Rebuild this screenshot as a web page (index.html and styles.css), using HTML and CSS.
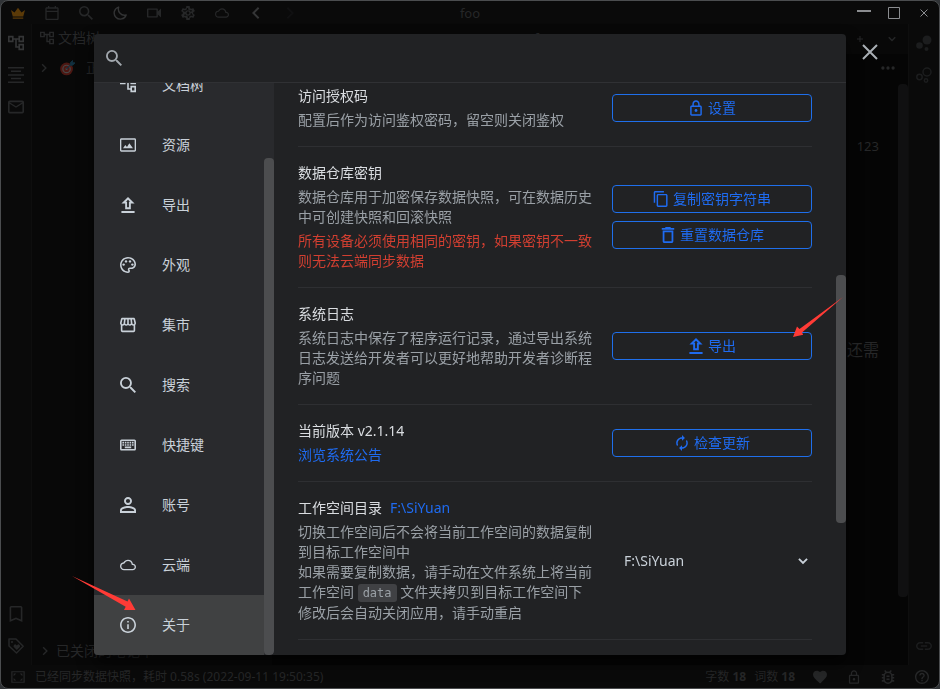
FILE: index.html
```html
<!DOCTYPE html>
<html lang="zh-CN">
<head>
	<meta charset="utf-8">
	<title>foo</title>
	<link rel="stylesheet" href="styles.css">
</head>
<body>
	<!-- icons -->
	<svg class="sprite" aria-hidden="true">
		<symbol id="iconSearch" viewBox="3 3 17.5 17.5"><path d="M15.5 14h-.79l-.28-.27A6.47 6.47 0 0 0 16 9.5 6.5 6.5 0 1 0 9.5 16c1.61 0 3.09-.59 4.23-1.57l.27.28v.79l5 4.99L20.49 19l-4.99-5zm-6 0C7.01 14 5 11.99 5 9.5S7.01 5 9.5 5 14 7.01 14 9.5 11.99 14 9.5 14z"/></symbol>
		<symbol id="iconFiles" viewBox="2 2 20 20"><path d="M22 11V3h-7v3H9V3H2v8h7V8h2v10h4v3h7v-8h-7v3h-2V8h2v3h7zM7 9H4V5h3v4zm10 6h3v4h-3v-4zm0-10h3v4h-3V5z"/></symbol>
		<symbol id="iconImage" viewBox="0 0 24 24"><path d="M22 4v16H2V4h20m0-2H2C.9 2 0 2.9 0 4v16c0 1.1.9 2 2 2h20c1.1 0 2-.9 2-2V4c0-1.1-.9-2-2-2zM4.5 17l3.5-5 2.5 3 3.5-5.5 5.5 7.5z"/></symbol>
		<symbol id="iconUpload" viewBox="3.5 3 17 17"><path d="M9 16h6v-6h4l-7-7-7 7h4v6zm3-10.17L14.17 8H13v6h-2V8H9.83L12 5.83zM5 18h14v2H5v-2z"/></symbol>
		<symbol id="iconTheme" viewBox="2 2 20 20"><path d="M12 22C6.49 22 2 17.51 2 12S6.49 2 12 2s10 4.04 10 9c0 3.31-2.69 6-6 6h-1.77c-.28 0-.5.22-.5.5 0 .12.05.23.13.33.41.47.64 1.06.64 1.67A2.5 2.5 0 0 1 12 22zm0-18c-4.41 0-8 3.59-8 8s3.59 8 8 8c.28 0 .5-.22.5-.5a.54.54 0 0 0-.14-.35c-.41-.46-.63-1.05-.63-1.65a2.5 2.5 0 0 1 2.5-2.5H16c2.21 0 4-1.79 4-4 0-3.86-3.59-7-8-7z"/><circle cx="6.5" cy="11.5" r="1.5"/><circle cx="9.5" cy="7.5" r="1.5"/><circle cx="14.5" cy="7.5" r="1.5"/><circle cx="17.5" cy="11.5" r="1.5"/></symbol>
		<symbol id="iconBazaar" viewBox="2 2 20 20"><path d="M21.9 8.89l-1.05-4.37c-.22-.9-1-1.52-1.91-1.52H5.05c-.9 0-1.69.63-1.9 1.52L2.1 8.89c-.24 1.02-.02 2.06.62 2.88.08.11.19.19.28.29V19c0 1.1.9 2 2 2h14c1.1 0 2-.9 2-2v-6.94c.09-.09.2-.18.28-.28.64-.82.87-1.87.62-2.89zm-2.99-3.9l1.05 4.37c.1.42.01.84-.25 1.17-.14.18-.44.47-.94.47-.61 0-1.14-.49-1.21-1.14L16.98 5l1.93-.01zM13 5h1.96l.54 4.52c.05.39-.07.78-.33 1.07-.22.26-.54.41-.95.41-.67 0-1.22-.59-1.22-1.31V5zM8.49 9.52L9.04 5H11v4.69c0 .72-.55 1.31-1.29 1.31-.34 0-.65-.15-.89-.41-.25-.29-.37-.68-.33-1.07zm-4.45-.16L5.05 5h1.97l-.58 4.86c-.08.65-.6 1.14-1.21 1.14-.49 0-.8-.29-.93-.47-.27-.32-.36-.75-.26-1.17zM5 19v-6.03c.08.01.15.03.23.03.87 0 1.66-.36 2.24-.95.6.6 1.4.95 2.31.95.87 0 1.65-.36 2.23-.93.59.57 1.39.93 2.29.93.84 0 1.64-.35 2.24-.95.58.59 1.37.95 2.24.95.08 0 .15-.02.23-.03V19H5z"/></symbol>
		<symbol id="iconKeymap" viewBox="2 2 20 20"><path d="M20 7v10H4V7h16m0-2H4c-1.1 0-2 .9-2 2v10c0 1.1.9 2 2 2h16c1.1 0 2-.9 2-2V7c0-1.1-.9-2-2-2zm-9 3h2v2h-2zm0 3h2v2h-2zM8 8h2v2H8zm0 3h2v2H8zm-3 0h2v2H5zm0-3h2v2H5zm3 6h8v2H8zm6-3h2v2h-2zm0-3h2v2h-2zm3 3h2v2h-2zm0-3h2v2h-2z"/></symbol>
		<symbol id="iconAccount" viewBox="4 4 16 16"><path d="M12 5.9a2.1 2.1 0 1 1 0 4.2 2.1 2.1 0 0 1 0-4.2m0 9c2.97 0 6.1 1.46 6.1 2.1v1.1H5.9V17c0-.64 3.13-2.1 6.1-2.1M12 4C9.79 4 8 5.79 8 8s1.79 4 4 4 4-1.79 4-4-1.79-4-4-4zm0 9c-2.67 0-8 1.34-8 4v3h16v-3c0-2.66-5.33-4-8-4z"/></symbol>
		<symbol id="iconCloud" viewBox="0 0 24 24"><path d="M19.35 10.04A7.49 7.49 0 0 0 12 4C9.11 4 6.6 5.64 5.35 8.04A5.99 5.99 0 0 0 0 14c0 3.31 2.69 6 6 6h13c2.76 0 5-2.24 5-5 0-2.64-2.05-4.78-4.65-4.96zM19 18H6c-2.21 0-4-1.79-4-4 0-2.05 1.53-3.76 3.56-3.97l1.07-.11.5-.95A5.47 5.47 0 0 1 12 6c2.62 0 4.88 1.86 5.39 4.43l.3 1.5 1.53.11A2.98 2.98 0 0 1 22 15c0 1.65-1.35 3-3 3z"/></symbol>
		<symbol id="iconInfo" viewBox="2 2 20 20"><path d="M11 7h2v2h-2zm0 4h2v6h-2zm1-9C6.48 2 2 6.48 2 12s4.48 10 10 10 10-4.48 10-10S17.52 2 12 2zm0 18c-4.41 0-8-3.59-8-8s3.59-8 8-8 8 3.59 8 8-3.59 8-8 8z"/></symbol>
		<symbol id="iconLock" viewBox="1 1 22 21"><path d="M18 8h-1V6c0-2.76-2.24-5-5-5S7 3.24 7 6v2H6c-1.1 0-2 .9-2 2v10c0 1.1.9 2 2 2h12c1.1 0 2-.9 2-2V10c0-1.1-.9-2-2-2zM9 6c0-1.66 1.34-3 3-3s3 1.34 3 3v2H9V6zm9 14H6V10h12v10zm-6-3c1.1 0 2-.9 2-2s-.9-2-2-2-2 .9-2 2 .9 2 2 2z"/></symbol>
		<symbol id="iconCopy" viewBox="1 1 22 22"><path d="M16 1H4c-1.1 0-2 .9-2 2v14h2V3h12V1zm3 4H8c-1.1 0-2 .9-2 2v14c0 1.1.9 2 2 2h11c1.1 0 2-.9 2-2V7c0-1.1-.9-2-2-2zm0 16H8V7h11v14z"/></symbol>
		<symbol id="iconTrashcan" viewBox="3 3 18 18"><path d="M6 19c0 1.1.9 2 2 2h8c1.1 0 2-.9 2-2V7H6v12zM8 9h8v10H8V9zm7.5-5l-1-1h-5l-1 1H5v2h14V4h-3.5z"/></symbol>
		<symbol id="iconRefresh" viewBox="1 1 22 22"><path d="M12 6v3l4-4-4-4v3c-4.42 0-8 3.58-8 8 0 1.57.46 3.03 1.24 4.26L6.7 14.8c-.45-.83-.7-1.79-.7-2.8 0-3.31 2.69-6 6-6zm6.76 1.74L17.3 9.2c.44.84.7 1.79.7 2.8 0 3.31-2.69 6-6 6v-3l-4 4 4 4v-3c4.42 0 8-3.58 8-8 0-1.57-.46-3.03-1.24-4.26z"/></symbol>
		<symbol id="iconCrown" viewBox="0 0 16 16"><path d="M0 4.5l4 3 4-5.5 4 5.5 4-3-2 7.5H2zM2 13h12v1.5H2z"/></symbol>
		<symbol id="iconCalendar" viewBox="2 1 20 21"><path d="M20 3h-2V1h-2v2H8V1H6v2H4c-1.1 0-2 .9-2 2v15c0 1.1.9 2 2 2h16c1.1 0 2-.9 2-2V5c0-1.1-.9-2-2-2zm0 17H4V10h16v10zM4 8V5h16v3z"/></symbol>
		<symbol id="iconMoon" viewBox="0 0 16 16"><path d="M6.5 1.2A7 7 0 1 0 15 10.2 7 7 0 0 1 6.5 1.2z" fill="none" stroke="currentColor" stroke-width="1.6" stroke-linejoin="round"/></symbol>
		<symbol id="iconVideo" viewBox="2 2 20 20"><path d="M15.5 7.5v9H4v-9h11.5m1-2H3c-.6 0-1 .4-1 1v11c0 .6.4 1 1 1h13.5c.6 0 1-.4 1-1V14l4.5 4.5v-13L17.5 10V6.5c0-.6-.4-1-1-1z"/></symbol>
		<symbol id="iconSettings" viewBox="2 2 20 20"><path d="M19.43 12.98c.04-.32.07-.64.07-.98s-.03-.66-.07-.98l2.11-1.65c.19-.15.24-.42.12-.64l-2-3.46a.5.5 0 0 0-.61-.22l-2.49 1c-.52-.4-1.08-.73-1.69-.98l-.38-2.65A.49.49 0 0 0 14 2h-4c-.25 0-.46.18-.49.42l-.38 2.65c-.61.25-1.17.59-1.69.98l-2.49-1a.5.5 0 0 0-.61.22l-2 3.46c-.13.22-.07.49.12.64l2.11 1.65c-.04.32-.07.65-.07.98s.03.66.07.98l-2.11 1.65c-.19.15-.24.42-.12.64l2 3.46c.12.22.39.3.61.22l2.49-1c.52.4 1.08.73 1.69.98l.38 2.65c.03.24.24.42.49.42h4c.25 0 .46-.18.49-.42l.38-2.65c.61-.25 1.17-.59 1.69-.98l2.49 1c.23.09.49 0 .61-.22l2-3.46a.5.5 0 0 0-.12-.64l-2.11-1.65zM17.5 12c0 .5-.1 1-.1 1.3l1.7 1.5-.9 1.5-2.2-.8c-.7.5-1.2.9-2 1.2l-.4 2.3h-1.7l-.4-2.3c-.8-.3-1.4-.7-2-1.2l-2.2.8-.9-1.5 1.8-1.5c-.1-.8-.1-1.7 0-2.6L4.9 9.2l.9-1.5 2.2.8c.6-.5 1.2-.9 2-1.2l.4-2.3h1.7l.4 2.3c.8.3 1.4.7 2 1.2l2.2-.8.9 1.5-1.8 1.5c.1.4.1.9.1 1.3zM12 8a4 4 0 1 0 0 8 4 4 0 0 0 0-8zm0 6a2 2 0 1 1 0-4 2 2 0 0 1 0 4z"/></symbol>
		<symbol id="iconBack" viewBox="0 0 16 16"><path d="M11 2L5 8l6 6" fill="none" stroke="currentColor" stroke-width="2.2"/></symbol>
		<symbol id="iconForward" viewBox="0 0 16 16"><path d="M5 2l6 6-6 6" fill="none" stroke="currentColor" stroke-width="2.2"/></symbol>
		<symbol id="iconDown" viewBox="0 0 16 16"><path d="M1.5 4.5L8 11l6.5-6.5" fill="none" stroke="currentColor" stroke-width="3"/></symbol>
		<symbol id="iconOutline" viewBox="0 0 16 16"><path d="M0 0h16v1.5H0zM3 3.6h10v1.5H3zM0 7.2h16v1.5H0zM3 10.8h10v1.5H3zM0 14.5h16V16H0z"/></symbol>
		<symbol id="iconMail" viewBox="2 2 20 20"><path d="M22 6c0-1.1-.9-2-2-2H4c-1.1 0-2 .9-2 2v12c0 1.1.9 2 2 2h16c1.1 0 2-.9 2-2V6zm-2 0l-8 5-8-5h16zm0 12H4V8l8 5 8-5v10z"/></symbol>
		<symbol id="iconBookmark" viewBox="2 2 20 20"><path d="M18 2H6c-1.1 0-2 .9-2 2v18l8-3.5 8 3.5V4c0-1.1-.9-2-2-2zm0 17l-6-2.6L6 19V4h12v15z"/></symbol>
		<symbol id="iconTag" viewBox="0 0 16 16"><path d="M1 1h7l7.2 7.2L8.5 15 1 8z" fill="none" stroke="currentColor" stroke-width="1.5" stroke-linejoin="round"/><circle cx="4" cy="4" r="1.1"/><path d="M8.8 12L6 9.2a1.6 1.6 0 0 1 2.3-2.3l.5.5.5-.5a1.6 1.6 0 0 1 2.3 2.3z"/></symbol>
		<symbol id="iconGraph" viewBox="0 0 16 16"><circle cx="11" cy="5" r="4.5"/><circle cx="3.5" cy="10.5" r="3.3"/><circle cx="10.5" cy="14" r="2"/></symbol>
		<symbol id="iconGlobalGraph" viewBox="0 0 16 16"><g fill="none" stroke="currentColor" stroke-width="1.5"><circle cx="11" cy="5" r="4"/><circle cx="3.5" cy="10" r="2.7"/><circle cx="10" cy="13.5" r="1.7"/></g></symbol>
		<symbol id="iconLink" viewBox="2 2 20 20"><path d="M3.9 12c0-1.71 1.39-3.1 3.1-3.1h4V7H7c-2.76 0-5 2.24-5 5s2.24 5 5 5h4v-1.9H7c-1.71 0-3.1-1.39-3.1-3.1zM8 13h8v-2H8v2zm9-6h-4v1.9h4c1.71 0 3.1 1.39 3.1 3.1s-1.39 3.1-3.1 3.1h-4V17h4c2.76 0 5-2.24 5-5s-2.24-5-5-5z"/></symbol>
		<symbol id="iconDock" viewBox="0 0 16 16"><path d="M1 2h14v12H1z" fill="none" stroke="currentColor" stroke-width="1.4"/><path d="M3 4h3L3 7zM13 4v3l-3-3zM3 12V9l3 3zM13 12h-3l3-3z"/></symbol>
		<symbol id="iconHeart" viewBox="2 2 20 20"><path d="M12 21.35l-1.45-1.32C5.4 15.36 2 12.28 2 8.5 2 5.42 4.42 3 7.5 3c1.74 0 3.41.81 4.5 2.09C13.09 3.81 14.76 3 16.5 3 19.58 3 22 5.42 22 8.5c0 3.78-3.4 6.86-8.55 11.54L12 21.35z"/></symbol>
		<symbol id="iconBug" viewBox="3 3 18 18"><path d="M20 8h-2.81a5.99 5.99 0 0 0-1.82-1.96L17 4.41 15.59 3l-2.17 2.17a6 6 0 0 0-2.83 0L8.41 3 7 4.41l1.62 1.63C7.88 6.55 7.26 7.22 6.81 8H4v2h2.09c-.05.33-.09.66-.09 1v1H4v2h2v1c0 .34.04.67.09 1H4v2h2.81a6 6 0 0 0 10.38 0H20v-2h-2.09c.05-.33.09-.66.09-1v-1h2v-2h-2v-1c0-.34-.04-.67-.09-1H20V8zm-4 7a4 4 0 0 1-8 0v-4a4 4 0 0 1 8 0v4zm-6-1h4v2h-4zm0-4h4v2h-4z"/></symbol>
		<symbol id="iconHelp" viewBox="2 2 20 20"><path d="M11 18h2v-2h-2v2zm1-16C6.48 2 2 6.48 2 12s4.48 10 10 10 10-4.48 10-10S17.52 2 12 2zm0 18c-4.41 0-8-3.59-8-8s3.59-8 8-8 8 3.59 8 8-3.59 8-8 8zm0-14c-2.21 0-4 1.79-4 4h2c0-1.1.9-2 2-2s2 .9 2 2c0 2-3 1.75-3 5h2c0-2.25 3-2.5 3-5 0-2.21-1.79-4-4-4z"/></symbol>
		<symbol id="iconMore" viewBox="0 0 16 16"><circle cx="2.2" cy="8" r="1.9"/><circle cx="8" cy="8" r="1.9"/><circle cx="13.8" cy="8" r="1.9"/></symbol>
		<symbol id="iconAdd" viewBox="0 0 16 16"><path d="M7 2h2v5h5v2H9v5H7V9H2V7h5z"/></symbol>
		<symbol id="iconClose" viewBox="0 0 16 16"><path d="M1 1l14 14M15 1L1 15" fill="none" stroke="currentColor" stroke-width="2"/></symbol>
		<symbol id="iconMin" viewBox="0 0 16 16"><path d="M1 5h14v2H1z"/></symbol>
		<symbol id="iconMax" viewBox="0 0 16 16"><path d="M2.5 2.5h11v11h-11z" fill="none" stroke="currentColor"/></symbol>
		<symbol id="iconTarget" viewBox="0 0 16 16"><circle cx="7" cy="9" r="6.8" fill="#4c1712"/><circle cx="7" cy="9" r="4.6" fill="#484646"/><circle cx="7" cy="9" r="3.3" fill="#4c1712"/><circle cx="7" cy="9" r="1.2" fill="#484646"/><path d="M7 9l4-4V2.5L13.3 0v2.5H16L13.5 5H11z" fill="#123040" stroke="#123040"/></symbol>
	</svg>

	<div class="app">
		<header class="toolbar">
			<div class="toolbar__side">
				<button class="tool tool--vip" aria-label="会员"><svg><use href="#iconCrown"/></svg></button>
				<button class="tool" aria-label="日记"><svg><use href="#iconCalendar"/></svg></button>
				<button class="tool" aria-label="搜索"><svg><use href="#iconSearch"/></svg></button>
				<button class="tool tool--on" aria-label="外观"><svg><use href="#iconMoon"/></svg></button>
				<button class="tool" aria-label="录屏"><svg><use href="#iconVideo"/></svg></button>
				<button class="tool" aria-label="设置"><svg><use href="#iconSettings"/></svg></button>
				<button class="tool" aria-label="云端"><svg><use href="#iconCloud"/></svg></button>
				<button class="tool tool--back" aria-label="后退"><svg><use href="#iconBack"/></svg></button>
				<button class="tool tool--off" aria-label="前进"><svg><use href="#iconForward"/></svg></button>
			</div>
			<span class="toolbar__title">foo</span>
			<div class="toolbar__side toolbar__window">
				<button class="winbtn" aria-label="最小化"><svg><use href="#iconMin"/></svg></button>
				<button class="winbtn" aria-label="最大化"><svg><use href="#iconMax"/></svg></button>
				<button class="winbtn winbtn--close" aria-label="关闭"><svg><use href="#iconClose"/></svg></button>
			</div>
		</header>

		<div class="layout">
			<nav class="dock dock--left">
				<button class="dock__item dock__item--on" aria-label="文档树"><svg><use href="#iconFiles"/></svg></button>
				<button class="dock__item" aria-label="大纲"><svg><use href="#iconOutline"/></svg></button>
				<button class="dock__item" aria-label="收集箱"><svg><use href="#iconMail"/></svg></button>
				<span class="dock__space"></span>
				<button class="dock__item" aria-label="书签"><svg><use href="#iconBookmark"/></svg></button>
				<button class="dock__item" aria-label="标签"><svg><use href="#iconTag"/></svg></button>
			</nav>
			<aside class="tree">
				<div class="tree__head"><svg><use href="#iconFiles"/></svg>文档树</div>
				<div class="tree__row"><svg class="tree__arrow"><use href="#iconForward"/></svg><svg class="tree__emoji"><use href="#iconTarget"/></svg>正</div>
				<span class="dock__space"></span>
				<div class="tree__row tree__row--closed"><svg class="tree__arrow"><use href="#iconForward"/></svg>已关闭的笔记本</div>
			</aside>
			<main class="editor">
				<div class="editor__tabs">
					<span class="editor__tab">foo</span>
					<button class="editor__btn" aria-label="新建"><svg><use href="#iconAdd"/></svg></button>
					<button class="editor__btn" aria-label="更多页签"><svg><use href="#iconDown"/></svg></button>
				</div>
				<div class="editor__bar"><svg><use href="#iconMore"/></svg></div>
				<div class="editor__body">
					<p class="editor__date">123</p>
					<p class="editor__text">还需</p>
					<div class="editor__thumb"></div>
				</div>
			</main>
			<nav class="dock dock--right">
				<button class="dock__item" aria-label="关系图"><svg><use href="#iconGraph"/></svg></button>
				<button class="dock__item" aria-label="全局关系图"><svg><use href="#iconGlobalGraph"/></svg></button>
				<span class="dock__space"></span>
				<button class="dock__item" aria-label="反向链接"><svg><use href="#iconLink"/></svg></button>
			</nav>
		</div>

		<footer class="status">
			<svg><use href="#iconDock"/></svg>
			<span class="status__msg">已经同步数据快照，耗时 0.58s (2022-09-11 19:50:35)</span>
			<span class="status__count">字数 <b>18</b></span>
			<span class="status__count">词数 <b>18</b></span>
			<div class="status__icons">
				<svg><use href="#iconHeart"/></svg>
				<svg><use href="#iconLock"/></svg>
				<svg><use href="#iconBug"/></svg>
				<svg><use href="#iconHelp"/></svg>
			</div>
		</footer>
	</div>

	<div class="mask">
		<div class="dialog" role="dialog" aria-label="设置">
			<button class="dialog__close" aria-label="关闭"><svg><use href="#iconClose"/></svg></button>
			<div class="dialog__search">
				<label for="search"><svg><use href="#iconSearch"/></svg></label>
				<input type="text" id="search" aria-label="搜索">
			</div>
			<div class="dialog__body">
				<div class="menu">
					<ul class="menu__list">
						<li class="menu__item"><svg><use href="#iconFiles"/></svg>文档树</li>
						<li class="menu__item"><svg><use href="#iconImage"/></svg>资源</li>
						<li class="menu__item"><svg><use href="#iconUpload"/></svg>导出</li>
						<li class="menu__item"><svg><use href="#iconTheme"/></svg>外观</li>
						<li class="menu__item"><svg><use href="#iconBazaar"/></svg>集市</li>
						<li class="menu__item"><svg><use href="#iconSearch"/></svg>搜索</li>
						<li class="menu__item"><svg><use href="#iconKeymap"/></svg>快捷键</li>
						<li class="menu__item"><svg><use href="#iconAccount"/></svg>账号</li>
						<li class="menu__item"><svg><use href="#iconCloud"/></svg>云端</li>
						<li class="menu__item menu__item--on"><svg><use href="#iconInfo"/></svg>关于</li>
					</ul>
					<div class="thumb thumb--menu"></div>
				</div>
				<div class="panel">
					<div class="panel__list">
						<section class="row">
							<div class="row__text">
								<div class="row__title">访问授权码</div>
								<div class="row__desc">配置后作为访问鉴权密码，留空则关闭鉴权</div>
							</div>
							<div class="row__ctrl">
								<button class="btn"><svg><use href="#iconLock"/></svg>设置</button>
							</div>
						</section>
						<section class="row">
							<div class="row__text">
								<div class="row__title">数据仓库密钥</div>
								<div class="row__desc">数据仓库用于加密保存数据快照，可在数据历史中可创建快照和回滚快照</div>
								<div class="row__desc row__desc--error">所有设备必须使用相同的密钥，如果密钥不一致则无法云端同步数据</div>
							</div>
							<div class="row__ctrl">
								<button class="btn"><svg><use href="#iconCopy"/></svg>复制密钥字符串</button>
								<button class="btn"><svg><use href="#iconTrashcan"/></svg>重置数据仓库</button>
							</div>
						</section>
						<section class="row">
							<div class="row__text">
								<div class="row__title">系统日志</div>
								<div class="row__desc">系统日志中保存了程序运行记录，通过导出系统日志发送给开发者可以更好地帮助开发者诊断程序问题</div>
							</div>
							<div class="row__ctrl">
								<button class="btn"><svg><use href="#iconUpload"/></svg>导出</button>
							</div>
						</section>
						<section class="row">
							<div class="row__text">
								<div class="row__title">当前版本 v2.1.14</div>
								<div class="row__desc"><a href="#">浏览系统公告</a></div>
							</div>
							<div class="row__ctrl">
								<button class="btn"><svg><use href="#iconRefresh"/></svg>检查更新</button>
							</div>
						</section>
						<section class="row">
							<div class="row__text">
								<div class="row__title"><label for="workspace">工作空间目录</label><a class="row__path" href="#">F:\SiYuan</a></div>
								<div class="row__desc">切换工作空间后不会将当前工作空间的数据复制到目标工作空间中<br>如果需要复制数据，请手动在文件系统上将当前工作空间 <code>data</code> 文件夹拷贝到目标工作空间下<br>修改后会自动关闭应用，请手动重启</div>
							</div>
							<div class="row__ctrl">
								<div class="select">
									<select id="workspace"><option>F:\SiYuan</option></select>
									<svg><use href="#iconDown"/></svg>
								</div>
							</div>
						</section>
					</div>
					<div class="thumb thumb--panel"></div>
				</div>
			</div>
			<svg class="arrow arrow--about" viewBox="0 0 64 36"><path d="M0 0l55.5 25.5 1.500-3L63.5 34H52l1.7-3.3z"/></svg>
			<svg class="arrow arrow--export" viewBox="0 0 50 40"><path d="M50 0L9 35.5l1.2 2.3L0 40l4-10.500 2.5 2.5z"/></svg>
		</div>
	</div>
</body>
</html>
```
FILE: styles.css
```css
*{
	box-sizing: border-box;
}
body{
	margin: 0;
	background-color: #303336;
	color: #c9d1d9;
	font: 14px/20px "Noto Sans", "Noto Sans CJK SC", sans-serif;
}
button, input, select{
	margin: 0;
	padding: 0;
	border: 0;
	background: none;
	color: inherit;
	font: inherit;
}
svg{
	display: block;
	flex-shrink: 0;
	width: 16px;
	height: 16px;
	fill: currentColor;
}
.sprite{
	position: absolute;
	width: 0;
	height: 0;
}
a{
	color: #1f6bf0;
	text-decoration: none;
}

/* app behind the dialog */
.app{
	display: flex;
	flex-direction: column;
	height: 100vh;
	overflow: hidden;
	border: 1px solid #4b4d4f;
	border-radius: 8px;
	background-color: #0a0a0a;
	color: #262728;
}
.toolbar{
	display: grid;
	grid-template-columns: 1fr auto 1fr;
	align-items: center;
	height: 23px;
}
.toolbar__side{
	display: flex;
	align-items: center;
}
.toolbar__title{
	font-size: 13px;
}
.toolbar__window{
	justify-content: flex-end;
	color: #8b8d90;
}
.tool{
	display: flex;
	justify-content: center;
	width: 34px;
}
.tool svg{
	width: 14px;
	height: 14px;
}
.tool--vip{
	color: #5b3a08;
}
.tool--on{
	color: #323334;
}
.tool--back{
	color: #343536;
}
.tool--off{
	color: #101011;
}
.winbtn{
	display: flex;
	justify-content: center;
	width: 30px;
}
.winbtn--close svg{
	width: 8px;
	height: 16px;
}
.layout{
	display: flex;
	flex: 1;
	min-height: 0;
}
.dock{
	display: flex;
	flex-direction: column;
	width: 31px;
	padding: 3px 0;
}
.dock--left{
	border-right: 1px solid #0e0e0e;
}
.dock--right{
	border-left: 1px solid #0e0e0e;
	color: #1c1d1e;
}
.dock__item{
	display: flex;
	align-items: center;
	justify-content: center;
	height: 32px;
}
.dock__item--on{
	color: #343536;
}
.dock__space{
	flex: 1;
}
.tree{
	display: flex;
	flex-direction: column;
	width: 240px;
	background-color: #080808;
}
.tree__head{
	display: flex;
	align-items: center;
	gap: 4px;
	height: 28px;
	padding-left: 8px;
}
.tree__head svg{
	width: 14px;
	height: 14px;
}
.tree__row{
	display: flex;
	align-items: center;
	gap: 11px;
	height: 32px;
	padding-left: 7px;
}
.tree__row--closed{
	gap: 6px;
	height: 28px;
	padding-left: 8px;
}
.tree__arrow{
	width: 10px;
	height: 10px;
}
.tree__emoji{
	width: 15px;
}
.editor{
	display: flex;
	flex: 1;
	flex-direction: column;
	min-width: 0;
	background-color: #050505;
}
.editor__tabs{
	display: flex;
	align-items: center;
	justify-content: flex-end;
	height: 30px;
	background-color: #080808;
}
.editor__tab{
	margin-right: auto;
	padding-left: 262px;
}
.editor__btn{
	display: flex;
	justify-content: center;
	width: 32px;
}
.editor__btn svg{
	width: 8px;
	height: 8px;
}
.editor__bar{
	display: flex;
	align-items: center;
	justify-content: flex-end;
	height: 28px;
	padding-right: 13px;
}
.editor__bar svg{
	width: 14px;
}
.editor__body{
	position: relative;
	flex: 1;
	padding: 54px 29px 0 0;
	text-align: right;
}
.editor__date{
	margin: 0 0 184px;
	font-size: 13px;
}
.editor__text{
	margin: 0;
	font-size: 16px;
}
.editor__thumb{
	position: absolute;
	top: 2px;
	right: 0;
	width: 10px;
	height: 88%;
	border-radius: 4px;
	background-color: #101011;
}
.status{
	display: flex;
	align-items: center;
	gap: 8px;
	height: 23px;
	padding: 0 10px 0 8px;
	font-size: 12px;
}
.status svg{
	width: 14px;
	height: 14px;
}
.status > svg{
	width: 18px;
}
.status__msg{
	margin-right: auto;
}
.status__icons{
	display: flex;
	gap: 20px;
	margin-left: 10px;
}

/* setting dialog */
.mask{
	position: fixed;
	top: 0;
	right: 0;
	bottom: 0;
	left: 0;
	display: flex;
	align-items: center;
	justify-content: center;
}
.dialog{
	position: relative;
	display: flex;
	flex-direction: column;
	width: 80vw;
	height: 90vh;
	border-radius: 4px;
	background-color: #212224;
	box-shadow: 0 8px 16px rgba(0, 0, 0, .6);
}
.dialog__close{
	position: absolute;
	top: 10px;
	right: -32px;
	color: #a9afb5;
}
.dialog__search{
	display: flex;
	align-items: center;
	gap: 8px;
	height: 49px;
	padding: 0 12px;
	border-bottom: 1px solid #303134;
}
.dialog__search label{
	color: #a2a8ae;
}
.dialog__search input{
	flex: 1;
	height: 28px;
	outline: none;
}
.dialog__body{
	display: flex;
	flex: 1;
	min-height: 0;
}
.menu{
	position: relative;
	display: flex;
	flex-direction: column;
	justify-content: flex-end;
	width: 180px;
	overflow: hidden;
	border-radius: 0 0 4px 4px;
	background-color: #292a2d;
}
.menu__list{
	flex-shrink: 0;
	margin: 0;
	padding: 0 10px 0 0;
	list-style: none;
}
.menu__item{
	display: flex;
	align-items: center;
	gap: 26px;
	height: 60px;
	padding-left: 26px;
}
.menu__item--on{
	background-color: #404142;
}
.thumb{
	position: absolute;
	right: 0;
	width: 10px;
	border-radius: 4px;
	background-color: #4c4d4f;
}
.thumb--menu{
	bottom: 0;
	height: 87%;
}
.panel{
	position: relative;
	flex: 1;
	min-width: 0;
	overflow: hidden;
}
.thumb--panel{
	top: 33.5%;
	height: 43.5%;
}
.panel__list{
	margin: -13px 34px 0 24px;
}
.row{
	display: flex;
	align-items: center;
	gap: 20px;
	padding: 16px 0;
	border-bottom: 1px solid #2e2f32;
}
.row__text{
	flex: 1;
}
.row__title{
	color: #dadde1;
}
.row__path{
	margin-left: 8px;
}
.row__desc{
	margin-top: 4px;
	color: #9aa0a6;
}
.row__desc--error{
	color: #d23f31;
}
.row__desc code{
	padding: 2px 5px;
	border-radius: 3px;
	background-color: #404144;
	font: 12px/20px "DejaVu Sans Mono", monospace;
}
.row__ctrl{
	display: flex;
	flex-direction: column;
	gap: 8px;
	width: 200px;
}
.btn{
	display: flex;
	align-items: center;
	justify-content: center;
	gap: 4px;
	height: 28px;
	border: 1px solid #1f6feb;
	border-radius: 4px;
	color: #1f6bf0;
}
.select{
	position: relative;
}
.select select{
	width: 100%;
	height: 28px;
	padding: 0 12px;
	appearance: none;
}
.select svg{
	position: absolute;
	top: 9px;
	right: 4px;
	width: 10px;
	height: 10px;
	pointer-events: none;
}

/* pointers */
.arrow{
	position: absolute;
	fill: #ff3b36;
	pointer-events: none;
}
.arrow--about{
	bottom: 43px;
	left: -22px;
	width: 64px;
	height: 36px;
}
.arrow--export{
	top: 263px;
	right: 3px;
	width: 50px;
	height: 40px;
}
```
